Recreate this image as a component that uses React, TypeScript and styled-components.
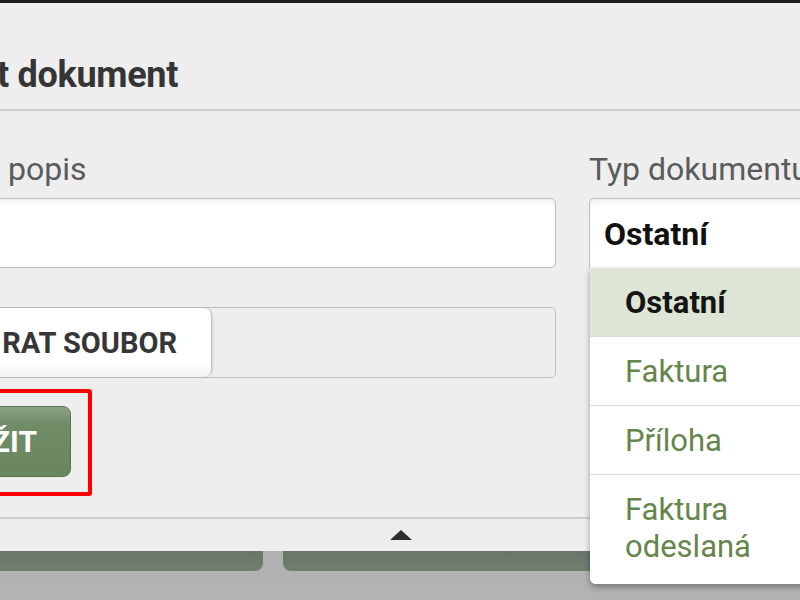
import styled, { createGlobalStyle } from 'styled-components';

const GlobalStyle = createGlobalStyle`
  html, body {
    margin: 0;
    padding: 0;
    background: #b5b5b5;
  }
  body {
    font-family: Roboto, "Noto Sans", Arial, sans-serif;
    overflow: hidden;
  }
  * {
    box-sizing: border-box;
  }
`;

const Page = styled.div`
  width: 800px;
  height: 600px;
  overflow: hidden;
  display: flex;
  flex-direction: column;
  background: linear-gradient(#9a9a9a 0px, #b3b3b3 600px);
`;

const TopBar = styled.div`
  height: 3px;
  flex: none;
  background: #1d211d;
`;

const Modal = styled.div`
  flex: none;
  width: 842px;
  margin-left: -20px;
  background: #eeeeee;
  position: relative;
  z-index: 2;
`;

const Header = styled.div`
  padding: 52px 0 14px 17px;
  border-bottom: 2px solid #cacaca;
`;

const Title = styled.h2`
  margin: 0;
  font-size: 36px;
  line-height: 40px;
  font-weight: 700;
  color: #353535;
  letter-spacing: -0.3px;
`;

const Body = styled.div`
  display: grid;
  grid-template-columns: 576px 1fr;
  column-gap: 33px;
  padding: 40px 20px 21px 0;
  border-bottom: 2px solid #cacaca;
`;

const Column = styled.div`
  display: flex;
  flex-direction: column;
  align-items: flex-start;
  position: relative;
`;

const Label = styled.label<{ indent?: number }>`
  display: block;
  font-size: 32px;
  line-height: 36px;
  color: #5b5b5b;
  margin-bottom: 11px;
  padding-left: ${({ indent }) => indent ?? 0}px;
  white-space: nowrap;
`;

const TextInput = styled.input`
  width: 100%;
  height: 70px;
  border: 1px solid #bcbcbc;
  border-radius: 5px;
  background: #fff;
  box-shadow: inset 0 5px 6px -3px rgba(0, 0, 0, 0.09);
  font: inherit;
  font-size: 30px;
  outline: none;
`;

const FileField = styled.div`
  margin-top: 39px;
  width: 100%;
  height: 71px;
  display: flex;
  border: 1px solid #bdbdbd;
  border-radius: 5px;
  background: #eeeeee;
`;

const FileButton = styled.div`
  width: 231px;
  height: 100%;
  display: flex;
  align-items: center;
  justify-content: flex-end;
  padding-right: 34px;
  background: linear-gradient(#ffffff 80%, #f2f2f2);
  border-right: 1px solid #c6c6c6;
  border-radius: 0 8px 8px 0;
  box-shadow: 1px 0 2px rgba(0, 0, 0, 0.12);
  font-size: 29px;
  font-weight: 700;
  color: #363636;
  white-space: nowrap;
`;

const Highlight = styled.div`
  margin-top: 11px;
  width: 112px;
  border: 4px solid #ff0000;
  border-radius: 3px;
  padding: 13px 17px 15px 0;
`;

const SubmitButton = styled.button`
  width: 87px;
  height: 71px;
  display: flex;
  align-items: center;
  justify-content: flex-end;
  padding: 0 33px 0 0;
  border: 1px solid #5b7251;
  border-radius: 8px;
  background: linear-gradient(#8ca385 0%, #718d68 22%, #6a865f 100%);
  color: #ffffff;
  font-family: inherit;
  font-size: 30px;
  font-weight: 700;
  white-space: nowrap;
`;

const SelectBox = styled.div`
  width: 100%;
  height: 70px;
  display: flex;
  align-items: center;
  padding-left: 14px;
  border: 1px solid #bcbcbc;
  border-bottom: none;
  border-radius: 5px 5px 0 0;
  background: #fff;
  box-shadow: inset 0 5px 6px -3px rgba(0, 0, 0, 0.09);
  font-size: 32px;
  font-weight: 700;
  color: #111;
`;

const SelectWrap = styled.div`
  position: relative;
  width: 100%;
`;

const Menu = styled.ul`
  position: absolute;
  top: 100%;
  left: 1px;
  width: 260px;
  margin: 0;
  padding: 0;
  list-style: none;
  background: #ffffff;
  border-radius: 0 0 0 6px;
  box-shadow: 0 3px 6px rgba(0, 0, 0, 0.35);
  z-index: 10;
`;

const Option = styled.li<{ selected?: boolean; last?: boolean }>`
  padding: 16px 0 ${({ last }) => (last ? 19 : 15)}px 35px;
  font-size: 31px;
  line-height: 37px;
  font-weight: ${({ selected }) => (selected ? 700 : 400)};
  color: ${({ selected }) => (selected ? '#141414' : '#65854d')};
  background: ${({ selected }) => (selected ? '#dee5d5' : '#ffffff')};
  border-bottom: ${({ last }) => (last ? 'none' : '1px solid #dcdcdc')};
  border-radius: ${({ last }) => (last ? '0 0 0 6px' : '0')};
`;

const Footer = styled.div`
  height: 32px;
  display: flex;
  align-items: center;
  justify-content: center;
`;

const Caret = styled.span`
  width: 0;
  height: 0;
  border-left: 11px solid transparent;
  border-right: 11px solid transparent;
  border-bottom: 10px solid #2e2e2e;
`;

const BackRow = styled.div`
  display: flex;
  gap: 20px;
  flex: none;
`;

const BackButton = styled.div<{ width: number; offset?: number }>`
  width: ${({ width }) => width}px;
  margin-left: ${({ offset }) => offset ?? 0}px;
  height: 20px;
  background: linear-gradient(#6a7669, #717e70);
  border-radius: 0 0 8px 8px;
`;

const options = ['Ostatní', 'Faktura', 'Příloha', 'Faktura odeslaná'];

export default function App() {
  return (
    <>
      <GlobalStyle />
      <Page>
        <TopBar />
        <Modal>
          <Header>
            <Title>t dokument</Title>
          </Header>
          <Body>
            <Column>
              <Label indent={28}>popis</Label>
              <TextInput type="text" />
              <FileField>
                <FileButton>RAT SOUBOR</FileButton>
              </FileField>
              <Highlight>
                <SubmitButton>ŽIT</SubmitButton>
              </Highlight>
            </Column>
            <Column>
              <Label>Typ dokumentu</Label>
              <SelectWrap>
                <SelectBox>Ostatní</SelectBox>
                <Menu>
                  {options.map((opt, i) => (
                    <Option key={opt} selected={i === 0} last={i === options.length - 1}>
                      {opt === 'Faktura odeslaná' ? (
                        <>
                          Faktura
                          <br />
                          odeslaná
                        </>
                      ) : (
                        opt
                      )}
                    </Option>
                  ))}
                </Menu>
              </SelectWrap>
            </Column>
          </Body>
          <Footer>
            <Caret />
          </Footer>
        </Modal>
        <BackRow>
          <BackButton width={284} offset={-20} />
          <BackButton width={520} />
        </BackRow>
      </Page>
    </>
  );
}
